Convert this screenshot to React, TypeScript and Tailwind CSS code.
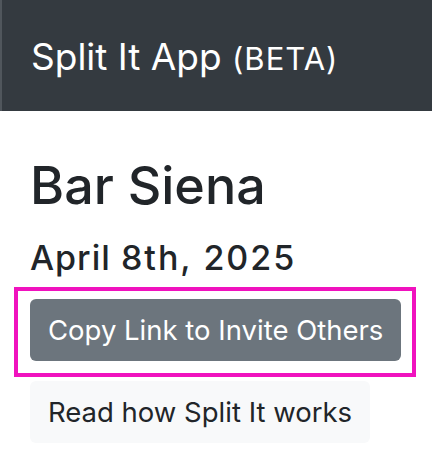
export default function App() {
  return (
    <div className="min-h-[456px] bg-white" style={{ fontFamily: "Inter, 'Noto Sans', sans-serif" }}>
      {/* Navbar */}
      <header className="flex h-[111px] items-center border-l-2 border-[#50565c] bg-[#343a40] pl-[29px]">
        <h1 className="pt-[2px] text-[37px] leading-none whitespace-nowrap text-white">
          Split It App <span className="text-[31px] tracking-[1px]">(BETA)</span>
        </h1>
      </header>

      <main className="px-[30px]">
        <h2 className="mt-[45px] text-[52px] leading-[60px] font-medium text-[#212529]">Bar Siena</h2>
        <h3 className="mt-[22px] text-[34px] leading-[40px] font-medium tracking-[1px] whitespace-nowrap text-[#212529]">
          April <span className="tracking-[2px]">8th, 2025</span>
        </h3>

        <div className="-ml-[16px] mt-[9px] w-[402px] border-4 border-[#f012be] px-3 pt-2 pb-3">
          <button className="rounded-md bg-[#6c757d] px-[18px] py-[11px] text-[27.5px] leading-[40px] whitespace-nowrap text-white">
            Copy Link to Invite Others
          </button>
        </div>

        <button className="mt-[4px] rounded-md bg-[#f8f9fa] px-[18px] py-[11px] text-[27.5px] leading-[40px] whitespace-nowrap text-[#212529]">
          Read how Split It works
        </button>
      </main>
    </div>
  );
}
